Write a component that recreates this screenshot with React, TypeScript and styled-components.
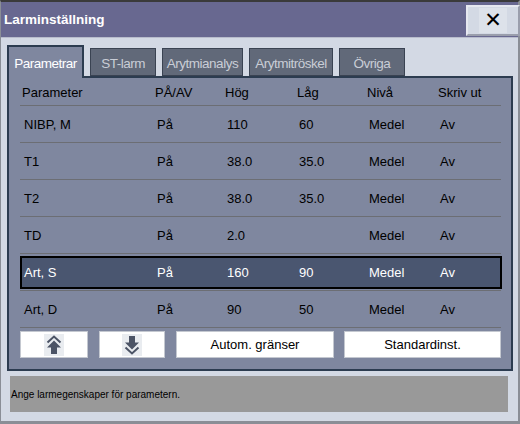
import React from "react";
import styled, { createGlobalStyle } from "styled-components";

const GlobalStyle = createGlobalStyle`
  html, body {
    margin: 0;
    padding: 0;
    background: #d3d9e4;
  }
  body {
    font-family: "Liberation Sans", Arial, sans-serif;
  }
`;

const tabs = [
  { label: "Parametrar", w: 77 },
  { label: "ST-larm", w: 66 },
  { label: "Arytmianalys", w: 81 },
  { label: "Arytmitröskel", w: 84 },
  { label: "Övriga", w: 66 },
];

const rows = [
  { name: "NIBP, M", onoff: "På", high: "110", low: "60", level: "Medel", print: "Av" },
  { name: "T1", onoff: "På", high: "38.0", low: "35.0", level: "Medel", print: "Av" },
  { name: "T2", onoff: "På", high: "38.0", low: "35.0", level: "Medel", print: "Av" },
  { name: "TD", onoff: "På", high: "2.0", low: "", level: "Medel", print: "Av" },
  { name: "Art, S", onoff: "På", high: "160", low: "90", level: "Medel", print: "Av" },
  { name: "Art, D", onoff: "På", high: "90", low: "50", level: "Medel", print: "Av" },
];

const SELECTED = 4;

function UpIcon() {
  return (
    <svg width="16" height="20" viewBox="0 0 16 20">
      <polyline points="1.5,7.5 8,1.5 14.5,7.5" fill="none" stroke="#4c5466" strokeWidth="2" />
      <polygon points="8,5.5 15,12.5 11,12.5 11,19 5,19 5,12.5 1,12.5" fill="#4c5466" />
    </svg>
  );
}

function DownIcon() {
  return (
    <svg width="16" height="20" viewBox="0 0 16 20">
      <polygon points="5,1 11,1 11,7.5 15,7.5 8,14.5 1,7.5 5,7.5" fill="#4c5466" />
      <polyline points="1.5,12.5 8,18.5 14.5,12.5" fill="none" stroke="#4c5466" strokeWidth="2" />
    </svg>
  );
}

export default function App() {
  return (
    <>
      <GlobalStyle />
      <Window>
        <TitleBar>
          <Title>Larminställning</Title>
          <CloseBtn>
            <CloseGlyph>✕</CloseGlyph>
          </CloseBtn>
        </TitleBar>
        <Body>
          <TabRow>
            {tabs.map((t, i) => (
              <Tab key={t.label} $active={i === 0} $w={t.w}>
                {t.label}
              </Tab>
            ))}
          </TabRow>
          <Panel>
            <HeaderRow>
              <Cell>Parameter</Cell>
              <Cell>PÅ/AV</Cell>
              <Cell>Hög</Cell>
              <Cell>Låg</Cell>
              <Cell>Nivå</Cell>
              <Cell>Skriv ut</Cell>
            </HeaderRow>
            {rows.map((r, i) => (
              <Row key={r.name}>
                <RowInner $selected={i === SELECTED}>
                  <Cell $data>{r.name}</Cell>
                  <Cell $data>{r.onoff}</Cell>
                  <Cell $data>{r.high}</Cell>
                  <Cell $data>{r.low}</Cell>
                  <Cell $data>{r.level}</Cell>
                  <Cell $data>{r.print}</Cell>
                </RowInner>
              </Row>
            ))}
            <ButtonRow>
              <Button $w={68}>
                <IconBox>
                  <UpIcon />
                </IconBox>
              </Button>
              <Button $w={66}>
                <IconBox>
                  <DownIcon />
                </IconBox>
              </Button>
              <Button $w={158}>Autom. gränser</Button>
              <Button $w={157} $gap={10}>
                Standardinst.
              </Button>
            </ButtonRow>
          </Panel>
          <StatusBar>Ange larmegenskaper för parametern.</StatusBar>
        </Body>
      </Window>
    </>
  );
}

const Window = styled.div`
  width: 520px;
  height: 424px;
  box-sizing: border-box;
  border-top: 2px solid #3a3a3a;
  border-left: 1px solid #8a8e96;
  border-right: 2px solid #8a8e96;
  border-bottom: 3px solid #8a8e96;
  background: #d3d9e4;
  display: flex;
  flex-direction: column;
`;

const TitleBar = styled.div`
  height: 35px;
  background: #686890;
  border-bottom: 1px solid #b8bccc;
  display: flex;
  align-items: center;
  justify-content: space-between;
  padding: 0 0 0 3px;
`;

const Title = styled.div`
  color: #ffffff;
  font-weight: bold;
  font-size: 13.5px;
`;

const CloseBtn = styled.div`
  width: 54px;
  height: 31px;
  box-sizing: border-box;
  margin-top: 2px;
  margin-right: -2px;
  border: 2px solid #e6e8f0;
  border-right-color: #9a9eac;
  border-bottom-color: #9a9eac;
  background: #d3d9e4;
  display: flex;
  align-items: center;
  justify-content: center;
`;

const CloseGlyph = styled.span`
  font-family: "DejaVu Sans", sans-serif;
  font-weight: bold;
  font-size: 21px;
  line-height: 1;
  color: #000000;
  background: #dde2ea;
  padding: 2px 5px;
`;

const Body = styled.div`
  flex: 1;
  display: flex;
  flex-direction: column;
  padding: 7px 6px 0 6px;
`;

const TabRow = styled.div`
  display: flex;
  align-items: flex-end;
  gap: 6px;
  height: 31px;
  position: relative;
  z-index: 1;
`;

const Tab = styled.div<{ $active?: boolean; $w: number }>`
  box-sizing: border-box;
  width: ${(p) => p.$w}px;
  height: ${(p) => (p.$active ? "33px" : "28px")};
  margin-bottom: ${(p) => (p.$active ? "-2px" : "0")};
  padding-top: ${(p) => (p.$active ? "1px" : "3px")};
  display: flex;
  align-items: center;
  justify-content: center;
  white-space: nowrap;
  font-size: 13.5px;
  letter-spacing: -0.5px;
  color: ${(p) => (p.$active ? "#ffffff" : "#c9cdd6")};
  background: ${(p) => (p.$active ? "#7f879f" : "#616979")};
  border: ${(p) => (p.$active ? "2px solid #2c3c50" : "1px solid #3a4352")};
  border-bottom: ${(p) => (p.$active ? "none" : "1px solid #3a4352")};
`;

const Panel = styled.div`
  border: 2px solid #2c3c50;
  background: #7f879f;
  padding: 0 10px 11px 11px;
  width: 506px;
  box-sizing: border-box;
`;

const columns = "133px 70px 72px 70px 71px 1fr";

const HeaderRow = styled.div`
  display: grid;
  grid-template-columns: ${columns};
  align-items: center;
  height: 28px;
  padding-left: 2px;
  padding-top: 1px;
  box-sizing: border-box;
  border-bottom: 1px solid #6c6e74;
  font-size: 13px;
  color: #000000;
`;

const Row = styled.div`
  height: 37px;
  box-sizing: border-box;
  border-bottom: 1px solid #6c6e74;
  display: flex;
  align-items: center;
`;

const RowInner = styled.div<{ $selected?: boolean }>`
  flex: 1;
  display: grid;
  grid-template-columns: ${columns};
  align-items: center;
  height: 33px;
  box-sizing: border-box;
  margin-right: -1px;
  padding-left: 0;
  font-size: 13px;
  color: ${(p) => (p.$selected ? "#ffffff" : "#000000")};
  background: ${(p) => (p.$selected ? "#4a5670" : "transparent")};
  border: 2px solid ${(p) => (p.$selected ? "#000000" : "transparent")};
`;

const Cell = styled.div<{ $data?: boolean }>`
  white-space: nowrap;
  padding-left: ${(p) => (p.$data ? "2px" : "0")};
`;

const ButtonRow = styled.div`
  display: flex;
  gap: 11px;
  margin-top: 3px;
  height: 27px;
`;

const Button = styled.div<{ $w: number; $gap?: number }>`
  width: ${(p) => p.$w}px;
  margin-left: ${(p) => (p.$gap ? `${p.$gap - 11}px` : "0")};
  box-sizing: border-box;
  background: #ffffff;
  border: 1px solid #c4c8d0;
  display: flex;
  align-items: center;
  justify-content: center;
  font-size: 13px;
  color: #000000;
`;

const IconBox = styled.div`
  width: 20px;
  height: 22px;
  background: #e9ecf0;
  display: flex;
  align-items: center;
  justify-content: center;
`;

const StatusBar = styled.div`
  margin: 5px 4px 0 3px;
  height: 36px;
  background: #999999;
  display: flex;
  align-items: center;
  padding-left: 1px;
  font-size: 10px;
  color: #000000;
`;
